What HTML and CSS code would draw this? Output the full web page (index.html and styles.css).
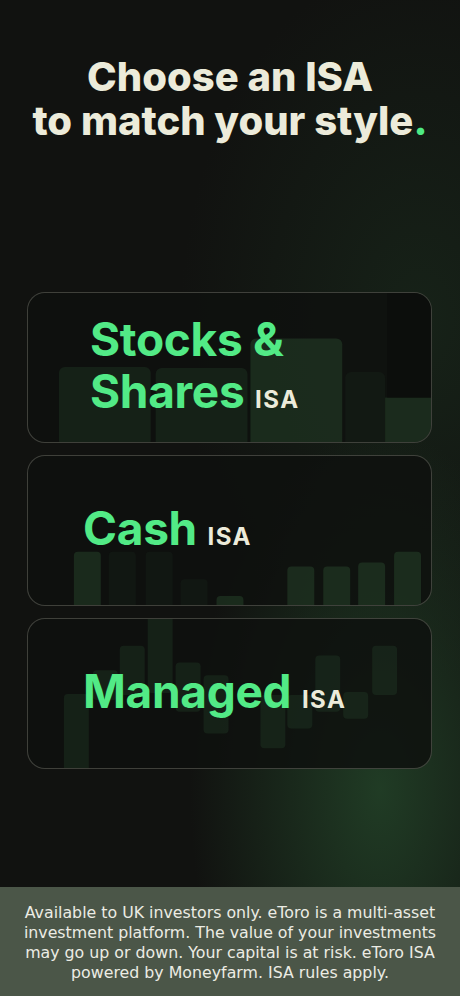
FILE: index.html
```html
<!DOCTYPE html>
<html lang="en">
<head>
  <meta charset="UTF-8" />
  <meta name="viewport" content="width=device-width, initial-scale=1.0"/>
  <title>Choose an ISA</title>
  <link rel="stylesheet" href="styles.css">
</head>
<body>

  <main class="screen">
    <h1 class="title">
      <span class="title-line">Choose an ISA</span>
      <span class="title-line">to match your style<span class="dot">.</span></span>
    </h1>

    <div class="cards">
      <!-- Stocks & Shares -->
      <a class="card card-stocks" href="#">
        <svg class="bars" viewBox="0 0 404 151" preserveAspectRatio="none" aria-hidden="true">
          <rect x="31" y="75" width="92" height="80" rx="6" class="b1"/>
          <rect x="128" y="76" width="92" height="80" rx="6" class="b1"/>
          <rect x="223" y="46" width="92" height="110" rx="6" class="b2"/>
          <rect x="318" y="80" width="40" height="80" rx="6" class="b0"/>
          <rect x="358" y="106" width="50" height="50" class="b2"/>
          <rect x="360" y="-5" width="50" height="111" class="dark"/>
        </svg>
        <p class="name">Stocks &amp;<br>Shares <span class="isa">ISA</span></p>
      </a>

      <!-- Cash -->
      <a class="card card-cash" href="#">
        <svg class="bars" viewBox="0 0 404 151" preserveAspectRatio="none" aria-hidden="true">
          <rect x="46" y="97" width="27" height="60" rx="4" class="b2"/>
          <rect x="81" y="97" width="27" height="60" rx="4" class="b0"/>
          <rect x="118" y="97" width="27" height="60" rx="4" class="b0"/>
          <rect x="153" y="125" width="27" height="40" rx="4" class="b0"/>
          <rect x="189" y="142" width="27" height="20" rx="4" class="b2"/>
          <rect x="260" y="112" width="27" height="45" rx="4" class="b2"/>
          <rect x="296" y="112" width="27" height="45" rx="4" class="b2"/>
          <rect x="331" y="108" width="27" height="49" rx="4" class="b2"/>
          <rect x="367" y="97" width="27" height="60" rx="4" class="b2"/>
        </svg>
        <p class="name">Cash <span class="isa">ISA</span></p>
      </a>

      <!-- Managed -->
      <a class="card card-managed" href="#">
        <svg class="bars" viewBox="0 0 404 151" preserveAspectRatio="none" aria-hidden="true">
          <rect x="36" y="76" width="25" height="80" rx="4" class="b1"/>
          <rect x="65" y="52" width="25" height="30" rx="4" class="b1"/>
          <rect x="92" y="27" width="25" height="50" rx="4" class="b1"/>
          <rect x="120" y="-5" width="25" height="80" rx="4" class="b1"/>
          <rect x="148" y="44" width="25" height="50" rx="4" class="b1"/>
          <rect x="176" y="57" width="25" height="59" rx="4" class="b1"/>
          <rect x="233" y="77" width="25" height="54" rx="4" class="b1"/>
          <rect x="260" y="77" width="25" height="34" rx="4" class="b1"/>
          <rect x="288" y="37" width="25" height="57" rx="4" class="b1"/>
          <rect x="316" y="74" width="25" height="27" rx="4" class="b1"/>
          <rect x="345" y="27" width="25" height="50" rx="4" class="b1"/>
        </svg>
        <p class="name">Managed <span class="isa">ISA</span></p>
      </a>
    </div>

    <footer class="disclaimer">
      <p>Available to UK investors only. eToro is a multi&#8209;asset investment platform. The value of your investments may go up or down. Your capital is at risk. eToro ISA powered by Moneyfarm. ISA rules apply.</p>
    </footer>
  </main>

</body>
</html>
```

FILE: styles.css
```css
/* Base */
html, body {
  margin: 0;
  padding: 0;
}

body {
  font-family: Inter, "Noto Sans", sans-serif;
  background: #111210;
  color: #ecebda;
}

.screen {
  height: 996px;
  display: flex;
  flex-direction: column;
  background:
    radial-gradient(ellipse 190px 360px at 380px 790px, rgba(36, 70, 42, 0.8), rgba(36, 70, 42, 0) 100%),
    radial-gradient(ellipse 240px 360px at 420px 320px, rgba(28, 50, 32, 0.5), rgba(28, 50, 32, 0) 100%),
    #111210;
}

/* Titulo */
.title {
  margin: 0;
  padding-top: 55px;
  text-align: center;
  font-size: 40px;
  line-height: 44px;
  font-weight: 800;
  color: #ecebda;
}
.title-line {
  display: block;
  height: 44px;
}
.title .dot {
  color: #4eea84;
}

/* Tarjetas */
.cards {
  margin: 149px 28px 0 27px;
  display: flex;
  flex-direction: column;
  gap: 12px;
}

.card {
  position: relative;
  height: 151px;
  display: flex;
  align-items: center;
  padding-left: 55px;
  border: 1px solid rgba(235, 235, 220, 0.22);
  border-radius: 18px;
  background: rgba(14, 16, 14, 0.85);
  overflow: hidden;
  text-decoration: none;
  box-sizing: border-box;
}
.card-stocks {
  padding-left: 62px;
}

.bars {
  position: absolute;
  left: 0;
  top: 0;
  width: 100%;
  height: 100%;
}
.bars .b0 { fill: rgba(40, 70, 46, 0.15); }
.bars .b1 { fill: rgba(40, 72, 46, 0.3); }
.bars .b2 { fill: rgba(44, 82, 50, 0.4); }
.bars .dark { fill: rgba(10, 12, 10, 0.6); }

.name {
  position: relative;
  margin: 4px 0 0;
  font-size: 46px;
  line-height: 52px;
  font-weight: 700;
  letter-spacing: -0.3px;
  color: #52ea86;
}
.isa {
  font-size: 24px;
  letter-spacing: 1.5px;
  color: #ecebda;
}

/* Aviso legal */
.disclaimer {
  margin-top: auto;
  height: 109px;
  box-sizing: border-box;
  padding: 16px 16px 0;
  background: #4b5648;
  text-align: center;
}
.disclaimer p {
  margin: 0;
  font-family: "DejaVu Sans", Inter, sans-serif;
  font-size: 15.8px;
  line-height: 20px;
  color: #ecece4;
}
```
